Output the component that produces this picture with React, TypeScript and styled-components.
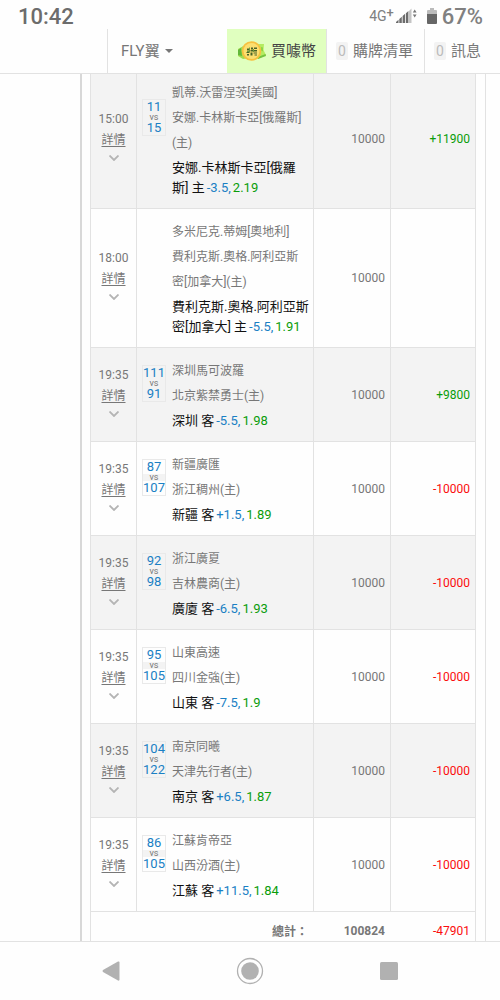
import React from 'react';
import styled, { createGlobalStyle } from 'styled-components';

const line = '#e2e2e2';

const GlobalStyle = createGlobalStyle`
  * { box-sizing: border-box; }
  body {
    margin: 0;
    background: #fff;
    color: #777;
    font-family: Roboto, "Noto Sans CJK TC", sans-serif;
    font-size: 12px;
  }
  button {
    border: 0;
    padding: 0;
    background: none;
    color: inherit;
    font: inherit;
    cursor: pointer;
  }
`;

const Page = styled.div`
  display: flex;
  flex-direction: column;
  height: 100vh;
  background: #fefefe;
`;

const StatusBar = styled.div`
  flex: none;
  display: flex;
  align-items: center;
  justify-content: space-between;
  height: 29px;
  padding: 4px 17px 0 18px;
  font-size: 22px;
  line-height: 26px;
  font-weight: 500;
  color: #6c6c6c;
`;

const StatusIcons = styled.div`
  display: flex;
  align-items: center;
  color: #808080;
  svg { margin-bottom: 2px; }
`;

const Network = styled.span`
  margin-right: 2px;
  padding-bottom: 2px;
  font-size: 14px;
  font-weight: 400;
  line-height: 24px;
  sup {
    font-size: 13px;
    font-weight: 500;
    line-height: 0;
    vertical-align: 4px;
  }
`;

const Battery = styled.svg`
  margin: 0 5px 0 9px;
`;

const Header = styled.header`
  flex: none;
  display: flex;
  height: 45px;
  border-bottom: 1px solid ${line};
  font-size: 15px;
  line-height: 20px;
`;

const HeaderSpace = styled.div`
  flex: 0 0 107px;
`;

const HeaderItem = styled.button<{ $grow?: boolean; $highlight?: boolean; $width?: number }>`
  display: flex;
  align-items: center;
  flex: ${p => (p.$grow ? '1 1 0' : `0 0 ${p.$width}px`)};
  gap: 5px;
  padding: 0 ${p => (p.$grow ? 13 : 9)}px;
  border-left: 1px solid ${line};
  white-space: nowrap;
  ${p => p.$highlight && `
    background: #e0ffbf;
    border-color: #e0ffbf;
    padding-left: 10px;
    color: #444;
  `}
`;

const Badge = styled.span`
  width: 12px;
  height: 18px;
  border-radius: 2px;
  background: #f3f3f3;
  color: #bbb;
  font-size: 14px;
  line-height: 18px;
  text-align: center;
`;

const Content = styled.main`
  flex: 1 1 0;
  display: flex;
  align-items: flex-start;
  min-height: 0;
  overflow: auto;
  scrollbar-width: none;
`;

const SideColumn = styled.div`
  flex: 0 0 82px;
  align-self: stretch;
  border-right: 2px solid #d8d8d8;
`;

const Sheet = styled.section`
  flex: 1 1 0;
  min-width: 0;
  margin: -4px 14px 0 0;
  padding: 0 9px 0 8px;
  border-right: 1px solid ${line};
`;

const Records = styled.table`
  width: 100%;
  table-layout: fixed;
  border-spacing: 0;
  border-left: 1px solid ${line};
`;

const Row = styled.tr`
  background: #fefefe;
  tbody &:nth-child(odd) { background: #f3f3f3; }
`;

const Cell = styled.td`
  padding: 0;
  border-right: 1px solid ${line};
  border-bottom: 1px solid ${line};
  vertical-align: middle;
`;

const TimeCell = styled(Cell)`
  text-align: center;
  line-height: 21px;
`;

const MatchCell = styled(Cell)`
  padding: 11px 4px 10px 5px;
`;

const AmountCell = styled(Cell)<{ $tone?: 'win' | 'loss' }>`
  padding-right: 5px;
  text-align: right;
  color: ${p => (p.$tone === 'win' ? '#0a9d0a' : p.$tone === 'loss' ? '#fb0d0d' : 'inherit')};
`;

const TotalCell = styled(AmountCell)<{ $last?: boolean }>`
  height: 38px;
  border-right-color: ${p => (p.$last ? line : 'transparent')};
  font-weight: ${p => (p.$last ? 400 : 700)};
`;

const DetailLink = styled.a`
  display: block;
  color: inherit;
  text-decoration: underline;
  text-underline-offset: 2px;
`;

const Toggle = styled.button`
  display: flex;
  justify-content: center;
  align-items: flex-start;
  width: 100%;
  height: 18px;
  padding-top: 4px;
`;

const Match = styled.div`
  display: grid;
  grid-template-columns: 24px 1fr;
  column-gap: 6px;
  row-gap: 2px;
  align-items: center;
`;

const Score = styled.div`
  display: flex;
  flex-direction: column;
  margin-bottom: 2px;
  border: 1px solid #e9e9e9;
  text-align: center;
  font-size: 9px;
  line-height: 7px;
  background: #f3f3f3;
`;

const Points = styled.span<{ $plain: boolean }>`
  display: flex;
  justify-content: center;
  height: 14px;
  background: ${p => (p.$plain ? '#fefefe' : 'transparent')};
  color: #1a80c4;
  font-size: 13px;
  line-height: 14px;
`;

const Teams = styled.div`
  grid-column: 2;
  line-height: 25px;
`;

const Pick = styled.div`
  grid-column: 2;
  color: #111;
  font-size: 13px;
  line-height: 20px;
`;

const Gap = styled.span`
  font-size: 8px;
  line-height: 0;
`;

const Handicap = styled.span`
  color: #1a80c4;
`;

const Odds = styled.span`
  color: #0a9d0a;
`;

const NavBar = styled.nav`
  flex: none;
  display: grid;
  grid-template-columns: repeat(3, 1fr);
  height: 59px;
  padding: 0 42px;
  border-top: 1px solid ${line};
  button {
    display: flex;
    align-items: center;
    justify-content: center;
  }
`;

type Bet = {
  time: string;
  score?: [number, number];
  teams: [string, string];
  pick: string;
  handicap: string;
  odds: string;
  result?: string;
};

const bets: Bet[] = [
  { time: '15:00', score: [11, 15], teams: ['凱蒂.沃雷涅茨[美國]', '安娜.卡林斯卡亞[俄羅斯](主)'], pick: '安娜.卡林斯卡亞[俄羅斯] 主', handicap: '-3.5', odds: '2.19', result: '+11900' },
  { time: '18:00', teams: ['多米尼克.蒂姆[奧地利]', '費利克斯.奧格.阿利亞斯密[加拿大](主)'], pick: '費利克斯.奧格.阿利亞斯密[加拿大] 主', handicap: '-5.5', odds: '1.91' },
  { time: '19:35', score: [111, 91], teams: ['深圳馬可波羅', '北京紫禁勇士(主)'], pick: '深圳 客', handicap: '-5.5', odds: '1.98', result: '+9800' },
  { time: '19:35', score: [87, 107], teams: ['新疆廣匯', '浙江稠州(主)'], pick: '新疆 客', handicap: '+1.5', odds: '1.89', result: '-10000' },
  { time: '19:35', score: [92, 98], teams: ['浙江廣夏', '吉林農商(主)'], pick: '廣廈 客', handicap: '-6.5', odds: '1.93', result: '-10000' },
  { time: '19:35', score: [95, 105], teams: ['山東高速', '四川金強(主)'], pick: '山東 客', handicap: '-7.5', odds: '1.9', result: '-10000' },
  { time: '19:35', score: [104, 122], teams: ['南京同曦', '天津先行者(主)'], pick: '南京 客', handicap: '+6.5', odds: '1.87', result: '-10000' },
  { time: '19:35', score: [86, 105], teams: ['江蘇肯帝亞', '山西汾酒(主)'], pick: '江蘇 客', handicap: '+11.5', odds: '1.84', result: '-10000' },
];

const CoinIcon = () => (
  <svg width="28" height="22" viewBox="0 0 28 22" aria-hidden="true">
    <path d="M0 9 9 4l2 14-6 1-5-3z" fill="#9fdc50" />
    <path d="M0 10l3-2 1 8-4-1z" fill="#62b73a" />
    <path d="M18 4 26 4l-.5 6L28 15l-8 4-4-1z" fill="#b4ec60" />
    <path d="m20 17 7.500-3 .5 2-8 3z" fill="#74c340" />
    <path d="m23 7 2 .5v4l-2-1z" fill="#8ed645" />
    <circle cx="13.500" cy="11" r="9.800" fill="#f7c03f" />
    <circle cx="13.500" cy="11" r="8" fill="#fbdf70" />
    <path d="M9 8.500h3v2H9zM13 7.500h2v2h-2zM16 7.500h3v1.500h-3zM12.500 10h6.500v1.500h-6.500zM8.500 12h3v1h-3zM9 14h2v1.500H9zM12.500 12.500h2v3h-2zM15.500 12.500h3.500v1h-3.500zM16.500 14.500h2.500v1h-2.500z" fill="#466328" />
    <path d="M11 7.500h1v4h-1zM15 9h1v3h-1zM9 11h3v1H9z" fill="#6f9a3a" />
  </svg>
);

const Chevron = () => (
  <svg width="10" height="6" viewBox="0 0 10 6" aria-hidden="true">
    <path d="m.5.5 4.500 4.500L9.500.5" fill="none" stroke="#b4b4b4" strokeWidth="1.800" />
  </svg>
);

const BetRow = ({ bet, plain }: { bet: Bet; plain: boolean }) => (
  <Row>
    <TimeCell>
      {bet.time}
      <DetailLink href="#detail">詳情</DetailLink>
      <Toggle aria-label="展開"><Chevron /></Toggle>
    </TimeCell>
    <MatchCell>
      <Match>
        {bet.score && (
          <Score>
            <Points $plain={plain}>{bet.score[0]}</Points>
            vs
            <Points $plain={plain}>{bet.score[1]}</Points>
          </Score>
        )}
        <Teams>{bet.teams.map(t => <div key={t}>{t}</div>)}</Teams>
        <Pick>
          {bet.pick}<Gap> </Gap><Handicap>{bet.handicap},</Handicap><Gap> </Gap><Odds>{bet.odds}</Odds>
        </Pick>
      </Match>
    </MatchCell>
    <AmountCell>10000</AmountCell>
    <AmountCell $tone={bet.result?.startsWith('+') ? 'win' : 'loss'}>{bet.result}</AmountCell>
  </Row>
);

export default function App() {
  return (
    <Page>
      <GlobalStyle />
      <StatusBar>
        <span>10:42</span>
        <StatusIcons>
          <Network>4G<sup>+</sup></Network>
          <svg width="22" height="16" viewBox="0 0 22 16" aria-hidden="true">
            <path d="M13 15V3l2.500-2.500V15z" fill="#c4c4c4" />
            <path d="M0 15v-1l2.500-2.200V15zM3.300 15v-4l2.500-2.300V15zM6.600 15V8l2.500-2.300V15zM9.900 15V5.200l2.500-2.300V15z" fill="#6c6c6c" />
            <path d="m16.800 4.500 1.900-3 1.900 3zM16.800 6.500l1.900 3 1.900-3z" fill="#777" />
          </svg>
          <Battery width="10" height="16" viewBox="0 0 10 16" aria-hidden="true">
            <path d="M3 0h4v2h2q1 0 1 1v3H0V3q0-1 1-1h2z" fill="#bbb" />
            <path d="M0 6h10v9q0 1-1 1H1q-1 0-1-1z" fill="#666" />
          </Battery>
          <span>67%</span>
        </StatusIcons>
      </StatusBar>
      <Header>
        <HeaderSpace />
        <HeaderItem $grow>
          FLY翼
          <svg width="8" height="4" viewBox="0 0 8 4" aria-hidden="true"><path d="M0 0h8L4 4z" fill="#777" /></svg>
        </HeaderItem>
        <HeaderItem $width={99} $highlight><CoinIcon />買噱幣</HeaderItem>
        <HeaderItem $width={98}><Badge>0</Badge>購牌清單</HeaderItem>
        <HeaderItem $width={76}><Badge>0</Badge>訊息</HeaderItem>
      </Header>
      <Content>
        <SideColumn />
        <Sheet>
          <Records>
            <colgroup>
              <col width="46" />
              <col />
              <col width="77" />
              <col width="85" />
            </colgroup>
            <tbody>
              {bets.map((bet, i) => <BetRow key={i} bet={bet} plain={i % 2 === 1} />)}
            </tbody>
            <tfoot>
              <Row>
                <TotalCell colSpan={2}>總計：</TotalCell>
                <TotalCell>100824</TotalCell>
                <TotalCell $tone="loss" $last>-47901</TotalCell>
              </Row>
            </tfoot>
          </Records>
        </Sheet>
      </Content>
      <NavBar>
        <button aria-label="返回">
          <svg width="18" height="20" viewBox="0 0 18 20"><path d="M16 .5Q17.500 0 17.500 1.500v17q0 1.500-1.500 1L1 11Q0 10 1 9z" fill="#b1b1b1" /></svg>
        </button>
        <button aria-label="主畫面">
          <svg width="28" height="28" viewBox="0 0 28 28">
            <circle cx="14" cy="14" r="12.500" fill="none" stroke="#b1b1b1" strokeWidth="1.300" />
            <circle cx="14" cy="14" r="8.800" fill="#b1b1b1" />
          </svg>
        </button>
        <button aria-label="最近">
          <svg width="18" height="18" viewBox="0 0 18 18"><rect width="18" height="18" rx="1.500" fill="#b1b1b1" /></svg>
        </button>
      </NavBar>
    </Page>
  );
}
